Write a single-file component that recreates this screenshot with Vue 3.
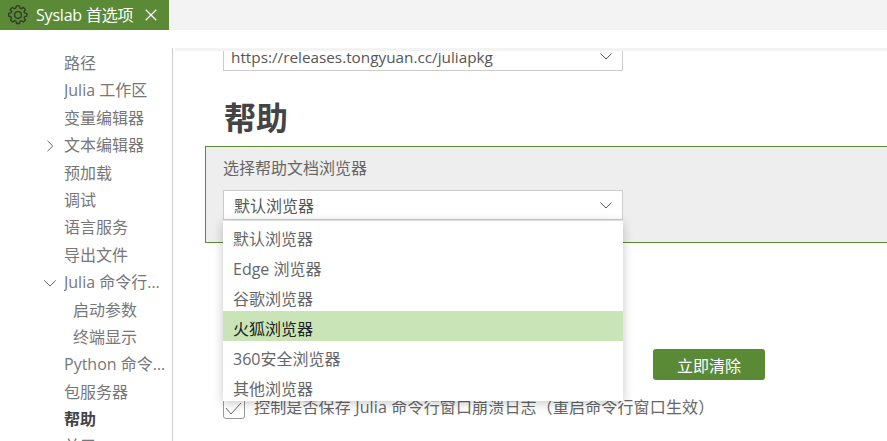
<script setup>
const nav = [
  { label: '路径' },
  { label: 'Julia 工作区' },
  { label: '变量编辑器' },
  { label: '文本编辑器', arrow: 'right' },
  { label: '预加载' },
  { label: '调试' },
  { label: '语言服务' },
  { label: '导出文件' },
  { label: 'Julia 命令行窗口', arrow: 'down' },
  { label: '启动参数', sub: true },
  { label: '终端显示', sub: true },
  { label: 'Python 命令行窗口' },
  { label: '包服务器' },
  { label: '帮助', active: true },
  { label: '关于' }
]
const options = ['默认浏览器', 'Edge 浏览器', '谷歌浏览器', '火狐浏览器', '360安全浏览器', '其他浏览器']
</script>

<template>
  <div class="app">
    <header class="tabbar">
      <div class="tab">
        <svg class="gear" viewBox="0 0 20 20" width="20" height="20" fill="none" stroke="#2f3a28" stroke-width="1.4" stroke-linejoin="round">
          <path d="M8.4 1h3.2l.5 2.5 1.5.6 2.1-1.4 2.2 2.2-1.4 2.1.6 1.5 2.4.5v3.1l-2.4.5-.6 1.5 1.4 2.1-2.2 2.2-2.1-1.4-1.5.6-.5 2.4H8.4l-.5-2.4-1.5-.6-2.1 1.4-2.2-2.2L3 14.2l-.6-1.5L0 12.2V9l2.4-.5.6-1.5-1.4-2.1 2.2-2.2 2.1 1.4 1.5-.6z" transform="translate(.7 -.1) scale(.93)"/>
          <circle cx="10" cy="10" r="3.4"/>
        </svg>
        <span class="tab-title">Syslab 首选项</span>
        <svg class="close" viewBox="0 0 12 12" width="12" height="12" stroke="#fff" stroke-width="1.3" fill="none">
          <path d="M.7.7l10.6 10.6M11.3.7L.7 11.3"/>
        </svg>
      </div>
    </header>

    <div class="body">
      <nav class="sidebar">
        <div v-for="item in nav" :key="item.label" class="nav-item" :class="{ sub: item.sub, active: item.active }">
          <svg v-if="item.arrow === 'right'" class="arrow" viewBox="0 0 12 12" width="12" height="12" fill="none" stroke="#666" stroke-width="1"><path d="M3.5 .8L8.8 6l-5.3 5.2"/></svg>
          <svg v-else-if="item.arrow === 'down'" class="arrow" viewBox="0 0 12 12" width="12" height="12" fill="none" stroke="#666" stroke-width="1"><path d="M.3 3.4L6 9l5.7-5.6"/></svg>
          <span class="nav-label">{{ item.label }}</span>
        </div>
      </nav>

      <main class="main">
        <div class="scrollshade"></div>
        <div class="select clipped">
          <span class="value url">https://releases.tongyuan.cc/juliapkg</span>
          <svg class="chev" viewBox="0 0 12 7" width="12" height="7" fill="none" stroke="#555" stroke-width="1"><path d="M.4.5L6 6l5.6-5.5"/></svg>
        </div>

        <h1 class="heading">帮助</h1>

        <section class="box">
          <div class="box-label">选择帮助文档浏览器</div>
          <div class="select-wrap">
            <div class="select">
              <span class="value pad">默认浏览器</span>
              <svg class="chev" viewBox="0 0 12 7" width="12" height="7" fill="none" stroke="#555" stroke-width="1"><path d="M.4.5L6 6l5.6-5.5"/></svg>
            </div>
            <ul class="menu">
              <li v-for="(o, i) in options" :key="o" class="option" :class="{ hot: i === 3 }">{{ o }}</li>
            </ul>
          </div>
        </section>

        <div class="clear-row">
          <button class="btn">立即清除</button>
        </div>

        <label class="check-row">
          <span class="check">
            <svg viewBox="0 0 22 22" width="22" height="22" fill="none" stroke="#666" stroke-width="1"><path d="M3 11l5 6L18 6"/></svg>
          </span>
          <span class="check-text">控制是否保存 Julia 命令行窗口崩溃日志（重启命令行窗口生效）</span>
        </label>
      </main>
    </div>
  </div>
</template>

<style>
html, body { margin: 0; background: #fff; overflow: hidden; }
</style>

<style scoped>
.app {
  width: 887px;
  height: 441px;
  overflow: hidden;
  display: flex;
  flex-direction: column;
  font-family: "Open Sans", "Noto Sans CJK SC", sans-serif;
  color: #666;
  background: #fff;
}
.tabbar { height: 30px; background: #f3f3f3; flex: none; display: flex; }
.tab {
  width: 169px;
  background: #5a8a35;
  display: flex;
  align-items: center;
  padding-left: 8px;
  box-sizing: border-box;
}
.gear { flex: none; }
.tab-title { color: #fff; font-size: 16px; margin-left: 8px; white-space: nowrap; line-height: 30px; letter-spacing: -0.2px; }
.close { margin-left: auto; margin-right: 12px; flex: none; }
.body { flex: 1; display: flex; min-height: 0; padding-top: 18px; }
.sidebar {
  width: 173px;
  flex: none;
  box-sizing: border-box;
  padding-top: 2px;
  border-right: 1px solid #ccc;
  overflow: hidden;
}
.nav-item {
  position: relative;
  height: 27.4px;
  line-height: 27.4px;
  padding-left: 64px;
  padding-right: 6px;
  font-size: 16px;
  color: #777;
}
.nav-item.sub { padding-left: 73px; }
.nav-item.active { color: #444; font-weight: 700; }
.nav-label {
  display: block;
  white-space: nowrap;
  overflow: hidden;
  text-overflow: ellipsis;
}
.arrow { position: absolute; left: 44px; top: 8px; }
.main { flex: 1; min-width: 0; position: relative; overflow: hidden; }
.scrollshade {
  position: absolute;
  left: 2px;
  right: 0;
  top: 0;
  height: 3px;
  background: #f3f3f3;
  z-index: 2;
}
.select {
  width: 400px;
  height: 30px;
  box-sizing: border-box;
  background: #fff;
  border: 1px solid #ccc;
  display: flex;
  align-items: center;
  justify-content: space-between;
  padding-right: 10px;
}
.select.clipped { margin: -7px 0 0 50px; }
.value { font-size: 15.3px; color: #555; white-space: nowrap; }
.url { padding: 1px 0 0 7px; }
.pad { padding-left: 10px; font-size: 16px; }
.heading {
  margin: 29px 0 0 51px;
  font-size: 32px;
  line-height: 36px;
  height: 39px;
  font-weight: 700;
  color: #444;
}
.box {
  margin: 7px -2px 0 32px;
  height: 97px;
  box-sizing: border-box;
  border: 1px solid #5a8a35;
  background: #eee;
  padding: 10px 0 0 17px;
}
.box-label { font-size: 16px; line-height: 22px; color: #666; height: 33px; }
.select-wrap { position: relative; width: 400px; }
.menu {
  position: absolute;
  left: 0;
  top: 31px;
  width: 100%;
  margin: 0;
  padding: 0;
  list-style: none;
  background: #fff;
  height: 180px;
  overflow: hidden;
  box-shadow: 0 2px 10px rgba(0, 0, 0, 0.22);
  z-index: 5;
}
.option {
  height: 30px;
  box-sizing: border-box;
  line-height: 30px;
  padding: 3px 0 0 10px;
  font-size: 16px;
  color: #666;
}
.option.hot { background: #c9e4b6; color: #222; }
.clear-row { display: flex; margin: 106px 0 0 480px; }
.btn {
  width: 112px;
  height: 31px;
  border: 0;
  padding: 0;
  border-radius: 3px;
  background: #5a8a35;
  color: #fff;
  font: inherit;
  font-size: 16px;
}
.check-row { display: flex; align-items: flex-start; margin: 17px 0 0 50px; }
.check {
  width: 22px;
  height: 22px;
  border: 1px solid #999;
  border-radius: 3px;
  box-sizing: border-box;
  display: flex;
  align-items: center;
  justify-content: center;
  flex: none;
}
.check svg { flex: none; }
.check-text { font-size: 16px; line-height: 18px; color: #666; margin: 1px 0 0 9px; white-space: nowrap; letter-spacing: 0.15px; }
</style>
